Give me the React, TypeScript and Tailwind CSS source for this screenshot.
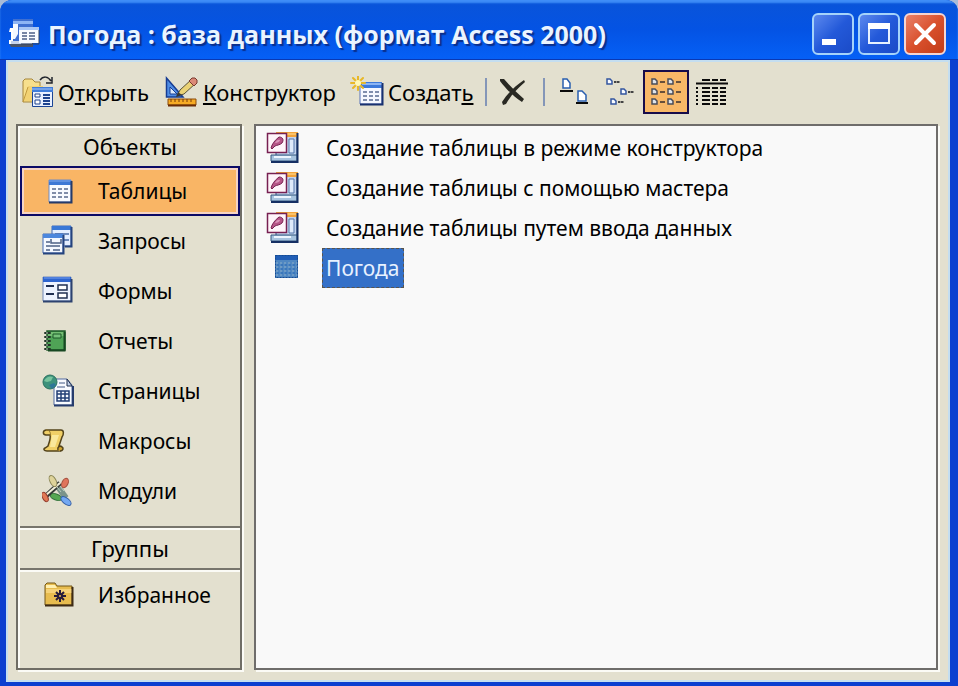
import { useState } from "react";
import type { ReactNode } from "react";
import clsx from "clsx";

interface SidebarItem {
  readonly id: string;
  readonly label: string;
  readonly icon: ReactNode;
}

function AppIcon() {
  return (
    <svg width="32" height="32" viewBox="0 0 32 32" aria-hidden="true">
      <path d="M5 1h20v24H5z" fill="#3f6fd0" />
      <path d="M5 3h20v3H5z" fill="#8db4f4" />
      <path d="M1 25h24v4H3z" fill="#4a5468" />
      <path d="M2 10h3v16H1v-4h2v-8H1z" fill="#fff" />
      <path d="M5 6h5v10l-3 5H5z" fill="#f4f8ff" />
      <path d="M3 23h21v3H3z" fill="#c8d4ea" />
      <path d="M11 9h20v16H11z" fill="#f8fbff" />
      <path d="M11 9h20v3H11z" fill="#a9c6f5" />
      <path d="M14 15h5M21 15h6M14 18h5M21 18h6M14 21h5M21 21h6" stroke="#4b5f87" strokeWidth="1.5" />
      <path d="M31 12v14H13" fill="none" stroke="#33435f" />
    </svg>
  );
}

function OpenIcon() {
  return (
    <svg width="32" height="32" viewBox="0 0 32 32" aria-hidden="true">
      <path d="M1 26V5l2-2h7l3 3h5v20z" fill="#f7df8c" stroke="#a5853a" />
      <path d="M2 25L6 10h15v15z" fill="#f2d274" />
      <path d="M1 26l5-15" stroke="#c19a3e" />
      <path d="M18 4c3-4 8-4 11 1M30 1v6h-6" fill="none" stroke="#20242c" strokeWidth="1.5" />
      <path d="M10.500 11.500h20v19h-20z" fill="#e8f0ff" stroke="#1b4595" />
      <path d="M10 11h21v5H10z" fill="#3f7ddb" />
      <path d="M10 13h20" stroke="#a9c9fa" />
      <path d="M13 18h5v3h-5zM13 24h5v4h-5z" fill="#fff" stroke="#1d438e" />
      <path d="M21 19h7M21 22h7M21 25h7M21 28h7" stroke="#1d438e" strokeWidth="2" />
    </svg>
  );
}

function DesignIcon() {
  return (
    <svg width="34" height="32" viewBox="0 0 34 32" aria-hidden="true">
      <path d="M1.500 2v19H18z" fill="#4f8ce4" stroke="#163c93" strokeWidth="1.500" />
      <path d="M5 11v7h7z" fill="#dce9fb" stroke="#163c93" />
      <path d="M3 23h28v6H3z" fill="#f6ab24" stroke="#8c4c0d" />
      <path d="M6 23v3M10 23v3M14 23v3M18 23v3M22 23v3M26 23v3" stroke="#7a3d08" />
      <path d="M3 29.500h28" stroke="#6b2c06" strokeWidth="2" />
      <path d="M12 20l3-6L27 3l4 4-12 11z" fill="#ead276" stroke="#59523a" />
      <path d="M24 5l3-3h3l2 2v3l-3 3z" fill="#db8a78" stroke="#78392f" />
      <path d="M11 21l2-5 4 3z" fill="#33363a" />
    </svg>
  );
}

function NewIcon() {
  return (
    <svg width="34" height="32" viewBox="0 0 34 32" aria-hidden="true">
      <path d="M10 7h22v21H10z" fill="#f5f8ff" stroke="#5773b8" />
      <path d="M11 6h21v6H11z" fill="#3c79da" />
      <path d="M12 8h20" stroke="#8bb4f3" strokeWidth="2" />
      <path d="M13 16h4M19 16h4M25 16h4M13 20h4M19 20h4M25 20h4M13 24h4M19 24h4M25 24h4" stroke="#586b93" strokeWidth="1.500" />
      <path d="M32.500 7v21.500H10" fill="none" stroke="#18316f" strokeWidth="2" />
      <path d="M8 0v14M1 7h14M3 2l10 10M13 2L3 12" stroke="#e8b827" strokeWidth="2" strokeLinecap="round" />
      <circle cx="8" cy="7" r="3" fill="#fff9b8" />
    </svg>
  );
}

function DeleteIcon() {
  return (
    <svg width="28" height="30" viewBox="0 0 28 30" aria-hidden="true">
      <path d="M1 2l4 0c6 7 13 14 20 20l-2 3C15 20 7 12 1 4z" fill="#292923" />
      <path d="M25 3l1 2C18 12 12 18 7 27l-3 1-1-3C9 16 16 9 25 3z" fill="#292923" />
    </svg>
  );
}

function LargeIconsIcon() {
  return (
    <svg width="30" height="30" viewBox="0 0 30 30" aria-hidden="true">
      <g fill="#fff" stroke="#2a5fb0" strokeWidth="1.500">
        <path d="M4 2h4l3 4v5H4zM19 14h4l4 4v6h-8z" />
      </g>
      <path d="M1 14h13M17 26h12" stroke="#0b0b0b" strokeWidth="2" />
    </svg>
  );
}

function SmallIconsIcon() {
  return (
    <svg width="30" height="30" viewBox="0 0 30 30" aria-hidden="true">
      <g fill="#f8fbff" stroke="#3355a0" strokeWidth="1.500">
        <path d="M2 2h3l2 2v3H2zM16 12h3l2 2v3h-5zM6 22h3l2 2v3H6z" />
      </g>
      <path d="M9 5h6M23 15h6M13 25h6" stroke="#444" strokeWidth="2" strokeDasharray="2.500 .5" />
    </svg>
  );
}

function ListIcon() {
  return (
    <svg width="32" height="30" viewBox="0 0 32 30" aria-hidden="true">
      <g fill="#dfe4ea" stroke="#4b4d59" strokeWidth="1.500">
        {[2, 12, 22].map((y) => (
          <path key={y} d={`M2 ${y}h3l2 2v3H2zM18 ${y}h3l2 2v3h-5z`} />
        ))}
      </g>
      <path d="M10 5h5M26 5h5M10 15h5M26 15h5M10 25h5M26 25h5" stroke="#68503a" strokeWidth="2" />
    </svg>
  );
}

function DetailsIcon() {
  return (
    <svg width="32" height="30" viewBox="0 0 32 30" aria-hidden="true">
      <path d="M0 6.500h32" stroke="#0b0b0b" strokeWidth="2" />
      <g stroke="#0b0b0b" strokeWidth="2">
        <path d="M6 3h8M16 3h6M24 3h6" />
        {[11, 15, 19, 23, 27].map((y) => (
          <path key={y} d={`M0 ${y}h2M6 ${y}h8M16 ${y}h6M24 ${y}h6`} />
        ))}
      </g>
    </svg>
  );
}

function TableIcon() {
  return (
    <svg width="36" height="32" viewBox="0 0 36 32" aria-hidden="true">
      <path d="M7 5h22v22H7z" fill="#f7faff" stroke="#6f8bc5" />
      <path d="M7 5h22v5H7z" fill="#3d78d5" />
      <path d="M7 6h22" stroke="#82aaec" />
      <path d="M10 14h4M16 14h4M22 14h4M10 18h4M16 18h4M22 18h4M10 22h4M16 22h4M22 22h4" stroke="#586a8d" strokeWidth="1.500" />
      <path d="M29.500 6v21.500H7" fill="none" stroke="#263b69" strokeWidth="2" />
    </svg>
  );
}

function QueryIcon() {
  return (
    <svg width="36" height="32" viewBox="0 0 36 32" aria-hidden="true">
      <path d="M10 1h19v20H10z" fill="#e5efff" stroke="#426bb5" />
      <path d="M10 1h19v4H10z" fill="#3978d6" />
      <path d="M13 9h14M21 15h6" stroke="#6e8bbc" strokeWidth="2" />
      <path d="M29.500 2v19.500H23" fill="none" stroke="#25437d" strokeWidth="2" />
      <path d="M1 9h20v19H1z" fill="#f4f8ff" stroke="#426bb5" />
      <path d="M1 9h20v4H1z" fill="#4c87dd" />
      <path d="M9 14v4h10v-4M4 17h4M4 21h14M4 25h4M11 25h7" fill="none" stroke="#4c6086" strokeWidth="1.500" />
      <path d="M21.500 10v18.500H1" fill="none" stroke="#25437d" strokeWidth="2" />
    </svg>
  );
}

function FormIcon() {
  return (
    <svg width="36" height="32" viewBox="0 0 36 32" aria-hidden="true">
      <path d="M1 2h28v24H1z" fill="#edf3ff" stroke="#7189b8" />
      <path d="M1 2h28v5H1z" fill="#2e65cf" />
      <path d="M2 3h26" stroke="#759fed" />
      <path d="M4 11h8M4 19h8" stroke="#1f2f52" strokeWidth="2" />
      <path d="M16 10h9v5h-9zM16 18h9v5h-9z" fill="#fff" stroke="#1f2f52" strokeWidth="1.500" />
      <path d="M29.500 4v22.500H1" fill="none" stroke="#2d426f" strokeWidth="2" />
    </svg>
  );
}

function ReportIcon() {
  return (
    <svg width="36" height="32" viewBox="0 0 36 32" aria-hidden="true">
      <path d="M5 6h18v19H5z" fill="#4fa356" stroke="#1c5828" strokeWidth="1.500" />
      <path d="M6 7h16v4H6z" fill="#73bd72" />
      <path d="M11 9h8v4h-8z" fill="#75c079" stroke="#1d5928" />
      <path d="M22.500 7v18.500H6" fill="none" stroke="#174822" strokeWidth="2" />
      <path d="M3 8h5M3 12h5M3 16h5M3 20h5M3 24h5" stroke="#223528" strokeWidth="2" strokeLinecap="round" />
      <path d="M4 8h2M4 12h2M4 16h2M4 20h2M4 24h2" stroke="#bad0b7" />
    </svg>
  );
}

function PageIcon() {
  return (
    <svg width="36" height="34" viewBox="0 0 36 34" aria-hidden="true">
      <path d="M12 5h13l5 6v20H12z" fill="#f8fbff" stroke="#536ba0" />
      <path d="M25 5v7h5z" fill="#c1d1e9" stroke="#20304f" />
      <path d="M17 9h6M15 13h8" stroke="#405985" />
      <path d="M15 17h12v10H15zM19 17v10M23 17v10M15 20h12M15 24h12" fill="none" stroke="#233f75" strokeWidth="1.500" />
      <path d="M31 12v19.500H12" fill="none" stroke="#263c6d" strokeWidth="2" />
      <circle cx="8" cy="8" r="7" fill="#3e927b" stroke="#29715f" />
      <path d="M2 7c3-5 6-5 9-4l-2 4-4 1z" fill="#78c49e" />
      <path d="M7 11l5-2 2 2-4 4z" fill="#2e7798" />
    </svg>
  );
}

function MacroIcon() {
  return (
    <svg width="36" height="32" viewBox="0 0 36 32" aria-hidden="true">
      <path d="M4 5h15c3 0 3 4 1 7l-3 9 3 2c0 2-1 3-3 3H5c-3 0-4-2-2-3l3-2c1-3 3-8 2-11H4C1 10 0 6 4 5z" fill="#f0cf66" stroke="#53431a" strokeWidth="1.500" />
      <path d="M10 10h7l-4 12H8z" fill="#fae89b" />
      <path d="M4 5c4 0 5 3 4 6" fill="none" stroke="#917528" />
      <path d="M16 25c-1-3 2-5 4-3 2 1 1 4-2 4" fill="#d0a52e" stroke="#53431a" strokeWidth="1.500" />
    </svg>
  );
}

function ModuleIcon() {
  return (
    <svg width="36" height="34" viewBox="0 0 36 34" aria-hidden="true">
      <ellipse cx="14" cy="23" rx="6" ry="3" transform="rotate(20 14 23)" fill="#55a752" stroke="#31723a" />
      <path d="M14 10l10 14" stroke="#7a9389" strokeWidth="6" />
      <path d="M4 22L18 9" stroke="#363c38" strokeWidth="5" />
      <path d="M4 21L18 9" stroke="#f3f0da" strokeWidth="2" />
      <ellipse cx="11" cy="7" rx="3" ry="6" transform="rotate(-28 11 7)" fill="#ded39a" stroke="#8d8858" />
      <ellipse cx="23" cy="9" rx="3" ry="5" transform="rotate(25 23 9)" fill="#e0755c" stroke="#a5503e" />
      <ellipse cx="3" cy="23" rx="2.500" ry="5" transform="rotate(-28 3 23)" fill="#e27a56" stroke="#953d2f" />
      <ellipse cx="24" cy="27" rx="6" ry="3" transform="rotate(38 24 27)" fill="#73a8f2" stroke="#315ca4" />
      <path d="M15 13l4 5M18 12l4 5" stroke="#b9cdbc" />
    </svg>
  );
}

function FavoritesIcon() {
  return (
    <svg width="36" height="32" viewBox="0 0 36 32" aria-hidden="true">
      <path d="M3 26V6l2-2h8l2 3h15v19z" fill="#e7bc4f" stroke="#725718" />
      <path d="M4 6h9l2 3H4z" fill="#fff0b1" />
      <path d="M4 10h26v4H4z" fill="#f5d278" />
      <path d="M30.500 8v18.500H3" fill="none" stroke="#3e2b15" strokeWidth="2" />
      <path d="M18 11v12M12 17h12M14 13l8 8M22 13l-8 8" stroke="#251c3b" strokeWidth="2" />
      <circle cx="18" cy="17" r="3" fill="#251c3b" />
      <circle cx="18" cy="17" r="1" fill="#e9bd50" />
    </svg>
  );
}

function WizardIcon() {
  return (
    <svg width="34" height="34" viewBox="0 0 34 34" aria-hidden="true">
      <path d="M10 2h21v28H10z" fill="#c3d4ee" stroke="#294b83" />
      <path d="M10 1h22v5H10z" fill="#f2a33a" />
      <path d="M12 3h18" stroke="#ffe09a" />
      <path d="M23 8h5v14h-5z" fill="#dfeafb" stroke="#5477aa" />
      <path d="M5 24h26v6H5z" fill="#a7c3df" stroke="#35597f" />
      <path d="M8 26h17" stroke="#edf6ff" strokeWidth="2" />
      <path d="M31.500 2v29H5" fill="none" stroke="#152f63" strokeWidth="2" />
      <path d="M1.500 2.500h19v19h-19z" fill="#fff4fa" stroke="#772052" strokeWidth="1.500" />
      <path d="M5 17c1-4 4-8 8-11 4 0 5 3 3 6-2 2-5 2-7 3l-3 3z" fill="#b65487" stroke="#782452" />
      <path d="M9 12c1-3 4-4 5-3 0 2-3 3-5 3z" fill="#d994b8" />
    </svg>
  );
}

function SelectedTableIcon() {
  return (
    <svg width="34" height="34" viewBox="0 0 34 34" aria-hidden="true">
      <path d="M9 4h23v23H9z" fill="#4f87c2" />
      <path d="M9 4h23v5H9z" fill="#215eb6" />
      <path d="M10 12h21M10 16h21M10 20h21M10 24h21" stroke="#8caec8" strokeDasharray="2 2" />
      <path d="M11 14h20M11 18h20M11 22h20" stroke="#2868b4" strokeDasharray="2 2" />
      <path d="M9.500 4.500h22v22h-22z" fill="none" stroke="#174b91" strokeDasharray="2 1" />
    </svg>
  );
}

const OBJECTS: readonly SidebarItem[] = [
  { id: "tables", label: "Таблицы", icon: <TableIcon /> },
  { id: "queries", label: "Запросы", icon: <QueryIcon /> },
  { id: "forms", label: "Формы", icon: <FormIcon /> },
  { id: "reports", label: "Отчеты", icon: <ReportIcon /> },
  { id: "pages", label: "Страницы", icon: <PageIcon /> },
  { id: "macros", label: "Макросы", icon: <MacroIcon /> },
  { id: "modules", label: "Модули", icon: <ModuleIcon /> },
];

const FAVORITES: SidebarItem = { id: "favorites", label: "Избранное", icon: <FavoritesIcon /> };

const ENTRIES = [
  "Создание таблицы в режиме конструктора",
  "Создание таблицы с помощью мастера",
  "Создание таблицы путем ввода данных",
  "Погода",
];

const VIEWS = [
  { id: "large", label: "Крупные значки", icon: <LargeIconsIcon /> },
  { id: "small", label: "Мелкие значки", icon: <SmallIconsIcon /> },
  { id: "list", label: "Список", icon: <ListIcon /> },
  { id: "details", label: "Таблица", icon: <DetailsIcon /> },
];

function TitleBar() {
  const button =
    "flex size-[42px] items-center justify-center rounded-md border-2 border-[#a5d3fa] bg-linear-to-br from-[#5c88ee] via-[#2359d9] to-[#1b4bc8]";

  return (
    <header className="flex min-h-15 items-center gap-1 border-b border-[#0a39b4] bg-linear-to-b from-[#0a54d8] via-[#0453e4] to-[#0560f6] pt-2 pr-3 pl-2 shadow-[inset_0_3px_2px_#3f8df7]">
      <AppIcon />
      <h1 className="grow pl-1 font-['Open_Sans',sans-serif] text-[25px] leading-9 font-bold text-[#eaf4ff] [text-shadow:2px_2px_1px_#0a2f8c]">
        Погода : база данных (формат Access 2000)
      </h1>
      <div className="flex shrink-0 gap-1">
        <button type="button" aria-label="Свернуть" className={button}>
          <svg width="32" height="32" viewBox="0 0 32 32">
            <path d="M5 21h14v6H5z" fill="#fff" />
          </svg>
        </button>
        <button type="button" aria-label="Развернуть" className={button}>
          <svg width="32" height="32" viewBox="0 0 32 32">
            <path d="M6 7h20v18H6z" fill="none" stroke="#e6f1ff" strokeWidth="2" />
            <path d="M5 5h22v6H5z" fill="#fff" />
          </svg>
        </button>
        <button
          type="button"
          aria-label="Закрыть"
          className="flex size-[42px] items-center justify-center rounded-md border-2 border-[#f5d5d2] bg-linear-to-br from-[#e88068] via-[#d9502c] to-[#c23c18]"
        >
          <svg width="32" height="32" viewBox="0 0 32 32">
            <path d="M7 7l18 18M25 7L7 25" stroke="#fff" strokeWidth="4" strokeLinecap="round" />
          </svg>
        </button>
      </div>
    </header>
  );
}

function Toolbar() {
  const [view, setView] = useState("list");

  return (
    <div className="flex h-16 items-center px-4 text-[22px]" role="toolbar">
      <button type="button" className="mr-4 flex items-center gap-1">
        <OpenIcon />
        <span>
          О<u>т</u>крыть
        </span>
      </button>
      <button type="button" className="mr-3.5 flex items-center gap-1">
        <DesignIcon />
        <span>
          <u>К</u>онструктор
        </span>
      </button>
      <button type="button" className="flex items-center gap-1">
        <NewIcon />
        <span>
          Создат<u>ь</u>
        </span>
      </button>
      <span className="mx-3 h-7 w-0.5 bg-[#8496b8]" />
      <button type="button" aria-label="Удалить">
        <DeleteIcon />
      </button>
      <span className="mr-1.5 ml-4 h-7 w-0.5 bg-[#8496b8]" />
      <div className="flex items-center">
        {VIEWS.map((v) => (
          <button
            key={v.id}
            type="button"
            aria-label={v.label}
            aria-pressed={view === v.id}
            onClick={() => setView(v.id)}
            className={clsx(
              "flex h-11 w-[46px] items-center justify-center",
              view === v.id && "border-2 border-[#170c4a] bg-[#f8b867]"
            )}
          >
            {v.icon}
          </button>
        ))}
      </div>
    </div>
  );
}

interface SidebarButtonProps {
  readonly item: SidebarItem;
  readonly active: boolean;
  readonly onSelect: (id: string) => void;
}

function SidebarButton({ item, active, onSelect }: SidebarButtonProps) {
  return (
    <button
      type="button"
      onClick={() => onSelect(item.id)}
      className={clsx(
        "flex h-[50px] w-full items-center gap-5 border-2 pl-5 text-left",
        active
          ? "border-[#0b0a66] bg-[#f9b565] shadow-[inset_0_0_0_2px_#f5d4c4]"
          : "border-transparent"
      )}
    >
      {item.icon}
      <span>{item.label}</span>
    </button>
  );
}

function Sidebar() {
  const [section, setSection] = useState("tables");

  return (
    <nav className="flex w-[226px] shrink-0 flex-col border-2 border-[#6f6d65] pl-0.5 shadow-[inset_2px_2px_0_#fbfbf6,2px_2px_0_#fbfbf6]">
      <h2 className="flex h-10 items-center justify-center text-[22px]">Объекты</h2>
      {OBJECTS.map((item) => (
        <SidebarButton key={item.id} item={item} active={section === item.id} onSelect={setSection} />
      ))}
      <h2 className="mt-2.5 flex h-11 items-center justify-center border-y-2 border-[#77756c] text-[22px] shadow-[inset_0_2px_0_#fbfbf6,0_2px_0_#fbfbf6]">
        Группы
      </h2>
      <SidebarButton item={FAVORITES} active={section === FAVORITES.id} onSelect={setSection} />
    </nav>
  );
}

function ObjectList() {
  const [selected, setSelected] = useState("Погода");

  return (
    <main className="min-w-0 grow border-2 border-[#6f6d6b] bg-[#f9f9f9] pt-0.5 shadow-[2px_2px_0_#fbfbf6]">
      <ul>
        {ENTRIES.map((entry) => (
          <li key={entry}>
            <button
              type="button"
              onClick={() => setSelected(entry)}
              className="flex h-10 items-center gap-[22px] pl-2.5 text-left"
            >
              {entry === "Погода" ? <SelectedTableIcon /> : <WizardIcon />}
              <span
                className={clsx(
                  "flex h-10 items-center px-1",
                  selected === entry &&
                    "bg-[#3470c8] text-[#e8f2ff] outline-1 -outline-offset-1 outline-dashed outline-[#59544c]"
                )}
              >
                {entry}
              </span>
            </button>
          </li>
        ))}
      </ul>
    </main>
  );
}

export default function App() {
  return (
    <div className="min-h-screen bg-[#a9bcd8]">
      <div className="flex min-h-screen flex-col overflow-hidden rounded-t-xl bg-[#0b3fd0] font-['Noto_Sans','Liberation_Sans',sans-serif] text-[21px] leading-7 text-black">
        <TitleBar />
        <div className="mr-2 mb-1 ml-1.5 flex grow flex-col bg-[#e3e0cf] shadow-[inset_0_0_0_2px_#c4def0]">
          <Toolbar />
          <div className="flex grow gap-3 pr-3 pb-3 pl-2.5">
            <Sidebar />
            <ObjectList />
          </div>
        </div>
      </div>
    </div>
  );
}
